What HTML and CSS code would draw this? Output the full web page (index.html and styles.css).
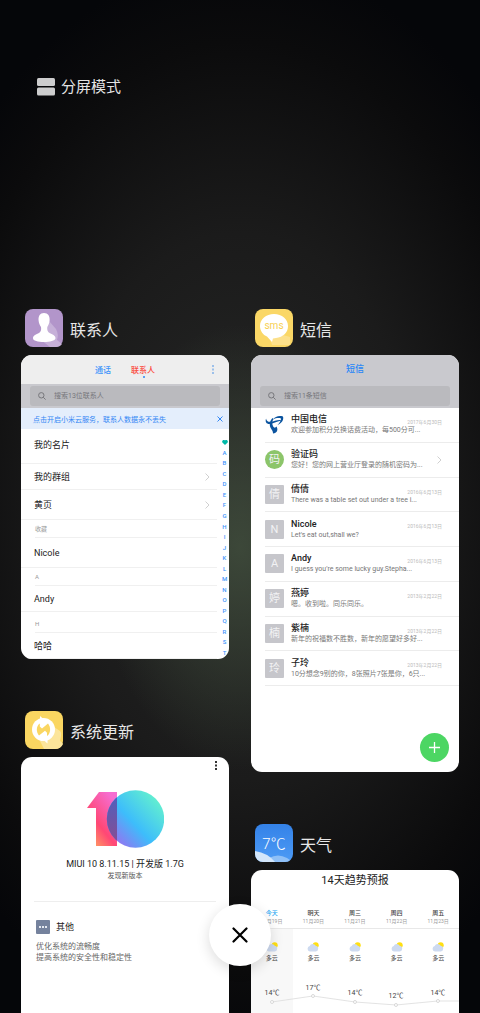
FILE: index.html
```html
<!DOCTYPE html>
<html lang="zh-CN">
<head>
    <meta charset="UTF-8">
    <meta name="viewport" content="width=device-width, initial-scale=1.0">
    <title>最近任务</title>
    <link rel="stylesheet" href="styles.css">
</head>
<body>

    <!-- 分屏模式 -->
    <header class="top-bar">
        <button class="split-btn">
            <svg width="18" height="18" viewBox="0 0 18 18" fill="#cdcdce">
                <rect width="18" height="8" rx="1.5"/>
                <rect y="9.5" width="18" height="8" rx="1.5"/>
            </svg>
            分屏模式
        </button>
    </header>

    <main class="tasks">
        <div class="column">

            <!-- 联系人 -->
            <section class="task">
                <div class="task-head">
                    <svg class="app-icon" viewBox="0 0 38 38">
                        <rect width="38" height="38" rx="8" fill="#b295ca"/>
                        <path d="M24 12l7 8q3 6 1 11l5 4q-2 3-6 3h-6l-9-7z" fill="#c6b0d8"/>
                        <path d="M19 4c4 0 6 3 5.600 7.500-.2 3-1.400 5-2.300 6.500-.4 3 .3 5 2.700 6.300 3 1.200 5.500 2.500 5.500 5C30 32 25 33 19 33S8 32 8 29.300c0-2.500 2.500-3.800 5.500-5 2.400-1.300 3-3.300 2.500-6.300-1-1.500-2.200-3.500-2.400-6.500C13.200 7 15 4 19 4z" fill="#fff"/>
                    </svg>
                    <h2>联系人</h2>
                </div>
                <div class="card">
                    <div class="tabs">
                        <button class="tab">通话</button>
                        <button class="tab active">联系人</button>
                        <button class="more-btn blue" aria-label="更多">
                            <svg width="2" height="9" viewBox="0 0 2 9"><path d="M0 0h2v2H0zM0 3.500h2v2H0zM0 7h2v2H0z" fill="currentColor"/></svg>
                        </button>
                    </div>
                    <div class="search-bar">
                        <label class="search-box">
                            <svg width="8" height="8" viewBox="0 0 8 8" fill="none" stroke="#77777b"><circle cx="3.300" cy="3.300" r="2.700"/><path d="M5.300 5.300l2.300 2.300"/></svg>
                            <input type="text" placeholder="搜索13位联系人" aria-label="搜索联系人">
                        </label>
                    </div>
                    <div class="notice">
                        <a href="#cloud">点击开启小米云服务，联系人数据永不丢失</a>
                        <button aria-label="关闭提示"><svg width="6" height="6" viewBox="0 0 6 6" stroke="#3387f5" fill="none"><path d="M.5.5l5 5M5.500.5l-5 5"/></svg></button>
                    </div>
                    <div class="contacts">
                        <div class="contact tall">我的名片</div>
                        <div class="contact short">我的群组<svg class="arrow" viewBox="0 0 5 8"><path d="M.5.5L4 4 .5 7.500"/></svg></div>
                        <div class="contact">黄页<svg class="arrow" viewBox="0 0 5 8"><path d="M.5.5L4 4 .5 7.500"/></svg></div>
                        <div class="letter">收藏</div>
                        <div class="contact">Nicole</div>
                        <div class="letter">A</div>
                        <div class="contact short">Andy</div>
                        <div class="letter wide">H</div>
                        <div class="contact short">哈哈</div>
                        <nav class="index">
                            <a href="#fav" aria-label="收藏"><svg width="6" height="5" viewBox="0 0 6 5"><path d="M3 5L.4 2.600C-.6.900 1.400-.6 3 .5c1.600-1.100 3.600.4 2.600 2.100z" fill="#00b9a8"/></svg></a>
                            <a href="#a">A</a><a href="#b">B</a><a href="#c">C</a><a href="#d">D</a><a href="#e">E</a>
                            <a href="#f">F</a><a href="#g">G</a><a href="#h">H</a><a href="#i">I</a><a href="#j">J</a>
                            <a href="#k">K</a><a href="#l">L</a><a href="#m">M</a><a href="#n">N</a><a href="#o">O</a>
                            <a href="#p">P</a><a href="#q">Q</a><a href="#r">R</a><a href="#s">S</a><a href="#t">T</a>
                        </nav>
                    </div>
                </div>
            </section>

            <!-- 系统更新 -->
            <section class="task last">
                <div class="task-head">
                    <svg class="app-icon" viewBox="0 0 38 38">
                        <rect width="38" height="38" rx="8" fill="#fad661"/>
                        <path d="M29 16l6 4q2 2 1 5l-1 5q2 1 3 3-2 5-8 5H19l-4-8z" fill="#fce59b"/>
                        <circle cx="18.500" cy="18.500" r="11.500" fill="#fff"/>
                        <path d="M15 5l8 7-8 7zM22.500 32.500l-8-7 8-7z" fill="#fff"/>
                        <path d="M14.800 12.500C11 15 11 21 14 24.500l6-4.800 2 2v3.300c4-2.500 4-9 1-12.500l-6 5-2.200-2z" fill="#fad661"/>
                    </svg>
                    <h2>系统更新</h2>
                </div>
                <div class="card update">
                    <button class="more-btn" aria-label="更多">
                        <svg width="2" height="9" viewBox="0 0 2 9"><path d="M0 0h2v2H0zM0 3.500h2v2H0zM0 7h2v2H0z" fill="currentColor"/></svg>
                    </button>
                    <svg class="logo" width="77" height="58" viewBox="0 0 77 58">
                        <defs>
                            <linearGradient id="one" x1="0" y1="1" x2=".7" y2="0">
                                <stop offset="0" stop-color="#ffb45c"/>
                                <stop offset=".45" stop-color="#ff4775"/>
                                <stop offset="1" stop-color="#f66dd0"/>
                            </linearGradient>
                            <linearGradient id="zero" x1=".1" y1=".9" x2=".9" y2=".15">
                                <stop offset="0" stop-color="#9b6df0"/>
                                <stop offset=".45" stop-color="#3dbdfb"/>
                                <stop offset="1" stop-color="#63f0cf"/>
                            </linearGradient>
                            <linearGradient id="both" x1="0" y1="1" x2="0" y2="0">
                                <stop offset="0" stop-color="#8c4b8f"/>
                                <stop offset="1" stop-color="#4a62c2"/>
                            </linearGradient>
                            <clipPath id="circle"><circle cx="48.500" cy="29" r="28.700"/></clipPath>
                        </defs>
                        <path d="M12 2h18v54H9V18H0z" fill="url(#one)"/>
                        <circle cx="48.500" cy="29" r="28.700" fill="url(#zero)"/>
                        <rect x="9" y="2" width="21" height="54" fill="url(#both)" clip-path="url(#circle)"/>
                    </svg>
                    <p class="version">MIUI 10 8.11.15 | 开发版 1.7G</p>
                    <p class="found">发现新版本</p>
                    <div class="changes">
                        <h3>
                            <svg width="14" height="14" viewBox="0 0 14 14"><rect width="14" height="14" rx="1" fill="#75829d"/><path d="M3 6h2v2H3zM6 6h2v2H6zM9 6h2v2H9z" fill="#e4e8f0"/></svg>
                            其他
                        </h3>
                        <p>优化系统的流畅度</p>
                        <p>提高系统的安全性和稳定性</p>
                    </div>
                </div>
            </section>
        </div>

        <div class="column">

            <!-- 短信 -->
            <section class="task">
                <div class="task-head">
                    <svg class="app-icon" viewBox="0 0 38 38">
                        <rect width="38" height="38" rx="8" fill="#fad766"/>
                        <path d="M28 26l7 2v8H17l-2-7z" fill="#fce08a"/>
                        <path d="M19 5c8 0 14 5 14 12s-5 11-12 12l-3 .5-1 3.500-5-5.500C8 26 5 22 5 17 5 10 11 5 19 5z" fill="#fff"/>
                        <text x="19" y="20" class="sms-text">sms</text>
                    </svg>
                    <h2>短信</h2>
                </div>
                <div class="card sms">
                    <h3 class="sms-title">短信</h3>
                    <div class="search-bar">
                        <label class="search-box">
                            <svg width="8" height="8" viewBox="0 0 8 8" fill="none" stroke="#77777b"><circle cx="3.300" cy="3.300" r="2.700"/><path d="M5.300 5.300l2.300 2.300"/></svg>
                            <input type="text" placeholder="搜索11条短信" aria-label="搜索短信">
                        </label>
                    </div>
                    <ul class="messages">
                        <li>
                            <svg class="avatar-logo" viewBox="0 0 19 19" fill="#0b549f">
                                <path d="M1 3.500C0 7 1.500 9.300 5 9c4-.3 7-3.200 12.500-3.500C14 3.800 9 6.500 5.500 6.800 3 7 1.500 6 1 3.500z"/>
                                <path d="M8 4.500C10 1.500 14 .2 18 1.500c1 3-1 6.500-5.500 8.500 2.500-2.500 3.500-4.500 3.500-6.500-2.500-.8-5-.5-8 1z"/>
                                <path d="M7.500 3C4.500 6 4 10.500 6 13.500c1 1.500 2 3 2 5 4-.5 5.500-3.500 3.500-7-1 1.500-2.500 1.500-3.300 0C6.800 9 7 6 8.500 4z"/>
                            </svg>
                            <div class="text"><h4>中国电信</h4><p>欢迎参加积分兑换话费活动，每500分可...</p></div>
                            <time>2017年6月30日</time>
                        </li>
                        <li>
                            <span class="avatar green">码</span>
                            <div class="text"><h4>验证码</h4><p>您好！您的网上营业厅登录的随机密码为...</p></div>
                            <svg class="arrow" viewBox="0 0 5 8"><path d="M.5.5L4 4 .5 7.500"/></svg>
                        </li>
                        <li>
                            <span class="avatar">倩</span>
                            <div class="text"><h4>倩倩</h4><p>There was a table set out under a tree i...</p></div>
                            <time>2016年6月13日</time>
                        </li>
                        <li>
                            <span class="avatar">N</span>
                            <div class="text"><h4>Nicole</h4><p>Let's eat out,shall we?</p></div>
                            <time>2016年6月13日</time>
                        </li>
                        <li>
                            <span class="avatar">A</span>
                            <div class="text"><h4>Andy</h4><p>I guess you're some lucky guy.Stepha...</p></div>
                            <time>2016年6月13日</time>
                        </li>
                        <li>
                            <span class="avatar">婷</span>
                            <div class="text"><h4>燕婷</h4><p>嗯。收到啦。同乐同乐。</p></div>
                            <time>2013年2月22日</time>
                        </li>
                        <li>
                            <span class="avatar">楠</span>
                            <div class="text"><h4>紫楠</h4><p>新年的祝福数不胜数，新年的愿望好多好...</p></div>
                            <time>2013年2月22日</time>
                        </li>
                        <li>
                            <span class="avatar">玲</span>
                            <div class="text"><h4>子玲</h4><p>10分想念9别的你，8张照片7张是你，6只...</p></div>
                            <time>2013年2月22日</time>
                        </li>
                    </ul>
                    <button class="add-btn" aria-label="新建短信">
                        <svg width="11" height="11" viewBox="0 0 11 11" stroke="#fff" stroke-width="1.300"><path d="M5.500 0v11M0 5.500h11"/></svg>
                    </button>
                </div>
            </section>

            <!-- 天气 -->
            <section class="task last">
                <div class="task-head">
                    <svg class="app-icon" viewBox="0 0 38 38">
                        <defs>
                            <linearGradient id="sky" x1="0" y1="0" x2="0" y2="1"><stop offset="0" stop-color="#3482e8"/><stop offset="1" stop-color="#4d9bf5"/></linearGradient>
                            <clipPath id="tile"><rect width="38" height="38" rx="8"/></clipPath>
                        </defs>
                        <g clip-path="url(#tile)">
                            <rect width="38" height="38" fill="url(#sky)"/>
                            <path d="M14 34q9-5 18 0l6 4H14z" fill="#8fc0f7"/>
                            <path d="M0 27q13 2 20 11H0z" fill="#d3e6fa"/>
                        </g>
                        <text x="19" y="25" class="temp-text">7℃</text>
                    </svg>
                    <h2>天气</h2>
                </div>
                <div class="card weather">
                    <h3>14天趋势预报</h3>
                    <div class="days">
                        <div class="day today"><b>今天</b><small>11月19日</small></div>
                        <div class="day"><b>明天</b><small>11月20日</small></div>
                        <div class="day"><b>周三</b><small>11月21日</small></div>
                        <div class="day"><b>周四</b><small>11月22日</small></div>
                        <div class="day"><b>周五</b><small>11月23日</small></div>
                    </div>
                    <div class="forecast">
                        <svg width="0" height="0" class="defs">
                            <symbol id="cloudy" viewBox="0 0 12 10">
                                <circle cx="8.700" cy="3.200" r="3" fill="#ffdf12"/>
                                <path d="M3 9.500a2.800 2.800 0 0 1-.3-5.500 3.300 3.300 0 0 1 6-.2A2.900 2.900 0 0 1 9 9.500z" fill="#cddaf0"/>
                            </symbol>
                        </svg>
                        <div class="sky"><svg><use href="#cloudy"/></svg>多云</div>
                        <div class="sky"><svg><use href="#cloudy"/></svg>多云</div>
                        <div class="sky"><svg><use href="#cloudy"/></svg>多云</div>
                        <div class="sky"><svg><use href="#cloudy"/></svg>多云</div>
                        <div class="sky"><svg><use href="#cloudy"/></svg>多云</div>
                        <svg class="chart" viewBox="0 0 208 34">
                            <path d="M21 23L62 17 104 23 145 26 187 22 208 22" fill="none" stroke="#dcdcdc" stroke-width=".8"/>
                            <g fill="#fff" stroke="#cfcfcf" stroke-width=".8">
                                <circle cx="21" cy="23" r="1.500"/><circle cx="62" cy="17" r="1.500"/><circle cx="104" cy="23" r="1.500"/><circle cx="145" cy="26" r="1.500"/><circle cx="187" cy="22" r="1.500"/>
                            </g>
                            <text x="21" y="16">14℃</text>
                            <text x="62" y="11">17℃</text>
                            <text x="104" y="16">14℃</text>
                            <text x="145" y="19">12℃</text>
                            <text x="187" y="16">14℃</text>
                        </svg>
                    </div>
                </div>
            </section>
        </div>
    </main>

    <button class="clear-btn" aria-label="清除全部">
        <svg width="16" height="16" viewBox="0 0 16 16" stroke="#000" stroke-width="2.200" stroke-linecap="round"><path d="M1.500 1.500l13 13M14.500 1.500l-13 13"/></svg>
    </button>

</body>
</html>
```
FILE: styles.css
```css
* {
    box-sizing: border-box;
}

body {
    margin: 0;
    height: 100vh;
    display: flex;
    flex-direction: column;
    position: relative;
    overflow: hidden;
    font-family: Roboto, "Noto Sans CJK SC", sans-serif;
    color: #222;
    background:
        radial-gradient(ellipse 30% 22% at 50% 54%, rgba(66, 80, 62, 0.8), rgba(66, 80, 62, 0)),
        radial-gradient(ellipse 75% 54% at 50% 50%, #272827 0%, #1b1b1b 50%, #0b0b0c 85%, #050609 100%);
}

h2, h3, h4, p, ul {
    margin: 0;
    padding: 0;
    font-weight: normal;
}

button {
    display: flex;
    align-items: center;
    justify-content: center;
    padding: 0;
    border: none;
    background: none;
    font-family: inherit;
    color: inherit;
    cursor: pointer;
}

a {
    color: inherit;
    text-decoration: none;
}

svg {
    display: block;
    flex-shrink: 0;
}

.top-bar {
    flex: 0 0 309px;
    padding: 76px 37px 0;
}

.split-btn {
    gap: 6px;
    font-size: 15px;
    line-height: 22px;
    color: #e4e4e4;
}

/* 任务卡片 */
.tasks {
    flex: 1;
    min-height: 0;
    display: grid;
    grid-template-columns: 1fr 1fr;
    gap: 22px;
    padding: 0 21px;
}

.column {
    display: flex;
    flex-direction: column;
    gap: 52px;
    min-width: 0;
    min-height: 0;
}

.task {
    display: flex;
    flex-direction: column;
}

.task.last {
    flex: 1;
    min-height: 0;
}

.task-head {
    display: flex;
    gap: 7px;
    padding: 0 4px 8px;
}

.task-head h2 {
    padding-top: 10px;
    font-size: 16px;
    line-height: 24px;
    color: #e8e8e8;
}

.app-icon {
    width: 38px;
    height: 38px;
}

.sms-text {
    font: 10px Roboto, sans-serif;
    fill: #f7cf50;
    text-anchor: middle;
}

.temp-text {
    font: 300 15px Roboto, "Noto Sans CJK SC", sans-serif;
    fill: #fff;
    text-anchor: middle;
}

.card {
    position: relative;
    overflow: hidden;
    border-radius: 11px;
    background: #fff;
}

.last .card {
    flex: 1;
    border-radius: 11px 11px 0 0;
}

/* 联系人 */
.tabs {
    display: flex;
    justify-content: center;
    gap: 20px;
    height: 29px;
    background: #eee;
}

.tab {
    position: relative;
    font-size: 8px;
    font-weight: 500;
    color: #3d94fb;
}

.tab.active {
    color: #fb4a40;
}

.tab.active::after {
    content: "";
    position: absolute;
    bottom: 6px;
    left: 50%;
    width: 2px;
    height: 2px;
    border-radius: 50%;
    background: #2b86f5;
}

.more-btn {
    position: absolute;
    top: 4px;
    right: 12px;
    color: #333;
}

.more-btn.blue {
    top: 10px;
    right: 15px;
    color: #9cc0ea;
}

.search-bar {
    height: 24px;
    padding: 2px 9px;
    background: #c9c9ce;
}

.search-box {
    display: flex;
    align-items: center;
    gap: 8px;
    height: 20px;
    padding-left: 8px;
    border-radius: 3px;
    background: #bababe;
}

.search-box input {
    flex: 1;
    min-width: 0;
    padding: 0;
    border: none;
    outline: none;
    background: none;
    font-family: inherit;
    font-size: 7px;
}

.search-box input::placeholder {
    color: #77777b;
}

.notice {
    display: flex;
    align-items: center;
    justify-content: space-between;
    height: 21px;
    padding: 0 6px 0 12px;
    font-size: 7px;
    color: #3387f5;
    background: #e4eefc;
}

.contacts {
    position: relative;
}

.contact {
    display: flex;
    align-items: center;
    justify-content: space-between;
    height: 30px;
    margin-right: 12px;
    padding: 0 7px 0 13px;
    border-bottom: 1px solid #f0f0f0;
    font-size: 9px;
}

.contact.tall {
    height: 35px;
    padding-bottom: 3px;
}

.contact.short {
    height: 26px;
}

.letter {
    height: 18px;
    margin: 0 12px 0 14px;
    border-bottom: 1px solid #f0f0f0;
    font-size: 6px;
    line-height: 18px;
    color: #999;
}

.letter.wide {
    height: 21px;
    line-height: 24px;
}

.arrow {
    width: 5px;
    height: 8px;
    fill: none;
    stroke: #c4c4c4;
    stroke-width: 0.8;
}

.index {
    position: absolute;
    top: 8px;
    right: 0;
    bottom: 1px;
    width: 9px;
    display: flex;
    flex-direction: column;
    font-size: 6px;
    font-weight: 500;
    line-height: 10px;
    color: #3e95fb;
}

.index a {
    flex: 1;
    display: flex;
    align-items: center;
    justify-content: center;
}

/* 系统更新 */
.update {
    padding-top: 33px;
    text-align: center;
}

.logo {
    margin: 0 auto 9px;
}

.version {
    font-size: 9px;
    line-height: 14px;
}

.found {
    font-size: 7px;
    line-height: 10px;
    color: #555;
}

.changes {
    margin: 20px 13px 0;
    padding: 18px 2px 0;
    border-top: 1px solid #eee;
    text-align: left;
    font-size: 8px;
    line-height: 11px;
    color: #666;
}

.changes h3 {
    display: flex;
    align-items: center;
    gap: 6px;
    margin-bottom: 7px;
    font-size: 9px;
    line-height: 14px;
    color: #222;
}

/* 短信 */
.sms {
    height: 417px;
}

.sms-title {
    background: #c9c9ce;
    text-align: center;
    font-size: 9px;
    font-weight: 500;
    line-height: 29px;
    color: #2585f8;
}

.messages {
    display: flex;
    flex-direction: column;
    height: 278px;
    list-style: none;
}

.messages li {
    flex: 1;
    display: flex;
    align-items: center;
    margin-left: 14px;
    padding-right: 17px;
    border-bottom: 1px solid #ececec;
}

.avatar,
.avatar-logo {
    width: 19px;
    height: 19px;
    margin-right: 7px;
}

.avatar {
    flex-shrink: 0;
    border-radius: 1px;
    background: #c6c6cb;
    text-align: center;
    font-size: 11px;
    line-height: 19px;
    color: #f2f2f4;
}

.avatar.green {
    border-radius: 50%;
    background: #8cc56a;
}

.text {
    flex: 1;
    min-width: 0;
    white-space: nowrap;
}

.text h4 {
    font-size: 9px;
    font-weight: 500;
    line-height: 12px;
}

.text p {
    font-size: 7px;
    line-height: 11px;
    color: #777;
}

.messages time {
    align-self: flex-start;
    margin-left: -40px;
    padding-top: 10px;
    font-size: 5px;
    line-height: 8px;
    color: #bbb;
}

.add-btn {
    position: absolute;
    right: 10px;
    bottom: 10px;
    width: 29px;
    height: 29px;
    border-radius: 50%;
    background: #4cd663;
}

/* 天气 */
.weather h3 {
    text-align: center;
    font-size: 11px;
    line-height: 22px;
}

.days {
    display: grid;
    grid-template-columns: repeat(5, 1fr);
    margin-top: 16px;
    padding-bottom: 2px;
    border-bottom: 1px solid #e8e8e8;
    text-align: center;
}

.day b,
.day small {
    display: block;
    font-size: 6px;
    font-weight: 500;
    line-height: 9px;
    color: #444;
}

.day small {
    font-size: 5px;
    font-weight: normal;
    color: #999;
}

.today b {
    color: #22a5f1;
}

.forecast {
    display: grid;
    grid-template-columns: repeat(5, 1fr);
    height: 100%;
    align-content: start;
    background: linear-gradient(to right, #f8f8f8 20%, #fff 20%);
}

.defs {
    position: absolute;
}

.sky {
    padding-top: 13px;
    text-align: center;
    font-size: 6px;
    line-height: 12px;
    color: #444;
}

.sky svg {
    width: 12px;
    height: 10px;
    margin: 0 auto;
}

.chart {
    grid-column: 1 / -1;
    width: 100%;
    margin-top: 15px;
}

.chart text {
    font-size: 7px;
    text-anchor: middle;
    fill: #444;
}

/* 清除按钮 */
.clear-btn {
    position: absolute;
    left: 50%;
    bottom: 47px;
    width: 62px;
    height: 62px;
    margin-left: -31px;
    border-radius: 50%;
    background: #fff;
    box-shadow: 0 4px 14px rgba(0, 0, 0, 0.14);
}
```
